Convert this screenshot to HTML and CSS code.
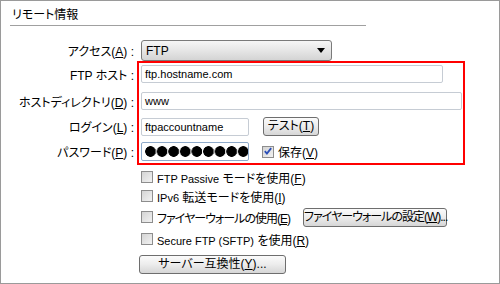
FILE: index.html
```html
<!DOCTYPE html>
<html lang="ja">
<head>
<meta charset="utf-8">
<title>リモート情報</title>
<link rel="stylesheet" href="styles.css">
</head>
<body>
<div class="panel">
  <div class="title">リモート情報</div>
  <div class="form">
    <div class="row r-access">
      <span class="lbl">アクセス(<u>A</u>) :</span>
      <div class="select"><span>FTP</span><i class="arrow"></i></div>
    </div>
    <div class="row r-host">
      <span class="lbl">FTP ホスト :</span>
      <div class="input w-host">ftp.hostname.com</div>
    </div>
    <div class="row r-dir">
      <span class="lbl">ホストディレクトリ(<u>D</u>) :</span>
      <div class="input w-dir">www</div>
    </div>
    <div class="row r-login">
      <span class="lbl">ログイン(<u>L</u>) :</span>
      <div class="input w-short">ftpaccountname</div>
      <div class="btn btn-test">テスト(<u>T</u>)</div>
    </div>
    <div class="row r-pass">
      <span class="lbl">パスワード(<u>P</u>) :</span>
      <div class="input w-short pass" aria-label="password"><span class="dots"></span></div>
      <span class="cb checked save-cb"><svg viewBox="0 0 11 11" width="11" height="11"><path d="M2 5.2 L4.3 7.8 L9 1.8" fill="none" stroke="#2b4fb8" stroke-width="2"/></svg></span>
      <span class="cb-text">保存(<u>V</u>)</span>
    </div>
    <div class="checks">
      <div class="crow c1"><span class="cb"></span><span class="cb-text"><span class="lat">FTP Passive</span> モードを使用(<u>F</u>)</span></div>
      <div class="crow c2"><span class="cb"></span><span class="cb-text"><span class="lat">IPv6</span> 転送モードを使用(<u>I</u>)</span></div>
      <div class="crow c3"><span class="cb"></span><span class="cb-text tight">ファイヤーウォールの使用(<u>E</u>)</span><div class="btn btn-fw tight">ファイヤーウォールの設定(<u>W</u>)...</div></div>
      <div class="crow c4"><span class="cb"></span><span class="cb-text"><span class="lat">Secure FTP (SFTP)</span> を使用(<u>R</u>)</span></div>
      <div class="crow c5"><div class="btn btn-srv">サーバー互換性(<u>Y</u>)...</div></div>
    </div>
  </div>
  <div class="redbox"></div>
</div>
</body>
</html>
```
FILE: styles.css
```css
html, body {
  margin: 0;
  padding: 0;
  background: #fff;
}
.panel {
  position: relative;
  width: 500px;
  height: 284px;
  box-sizing: border-box;
  border: 1px solid #9a9a9a;
  font-family: "Liberation Sans", "Noto Sans CJK JP", sans-serif;
  font-size: 12px;
  font-feature-settings: "palt";
  color: #000;
  overflow: hidden;
}
u { text-decoration: underline; text-underline-offset: 1px; }
.lat { font-size: 11px; }
.tight { letter-spacing: -1px; }
.title {
  margin-left: 9px;
  width: 354px;
  height: 20px;
  padding: 4px 0 0 2px;
  line-height: 20px;
  border-bottom: 1px solid #a0a0a0;
}
.form { padding-top: 14px; }
.row { display: flex; align-items: center; }
.lbl {
  flex: none;
  width: 133px;
  margin-right: 7px;
  text-align: right;
  white-space: nowrap;
}
.r-access { height: 21px; }
.r-host { height: 18px; margin-top: 4px; }
.r-dir { height: 18px; margin-top: 9px; }
.r-login { height: 19px; margin-top: 7px; }
.r-pass { height: 19px; margin-top: 6px; }

.select {
  box-sizing: border-box;
  width: 191px;
  height: 21px;
  border: 1px solid #7a7a7a;
  border-radius: 3px;
  background: linear-gradient(#f6f6f6, #e6e6e6 50%, #d4d4d4);
  display: flex;
  align-items: center;
  padding-left: 4px;
}
.select span { flex: 1; }
.arrow {
  width: 0;
  height: 0;
  margin-right: 6px;
  border-left: 4px solid transparent;
  border-right: 4px solid transparent;
  border-top: 5px solid #000;
}
.input {
  box-sizing: border-box;
  height: 18px;
  border: 1px solid #c6ccd4;
  border-radius: 2px;
  background: #fff;
  padding-left: 3px;
  font-size: 11px;
  line-height: 16px;
  white-space: nowrap;
  overflow: hidden;
}
.w-host { width: 302px; }
.w-dir { width: 321px; }
.w-short { width: 108px; }
.pass {
  height: 19px;
  border-color: #8ea9c9;
  display: flex;
  align-items: center;
}
.dots {
  display: block;
  flex: none;
  width: 110px;
  height: 11px;
  background-image: radial-gradient(circle at 5.5px 50%, #000 5px, transparent 5.6px);
  background-size: 11.6px 11px;
  background-repeat: repeat-x;
  background-position: 0 0;
}
.btn {
  box-sizing: border-box;
  height: 19px;
  border: 1px solid #6e6e6e;
  border-radius: 3px;
  background: linear-gradient(#fbfbfb, #ececec 50%, #d6d6d6);
  text-align: center;
  line-height: 17px;
  white-space: nowrap;
}
.btn-test { width: 56px; margin-left: 14px; }
.btn-fw { width: 144px; margin-left: auto; }
.btn-srv { width: 147px; margin-left: -2px; }

.cb {
  flex: none;
  box-sizing: border-box;
  width: 12px;
  height: 12px;
  border: 1px solid #8d8d8d;
  background: linear-gradient(135deg, #d4d4d4, #f2f2f2);
  display: inline-flex;
  align-items: center;
  justify-content: center;
}
.cb svg { display: block; }
.save-cb { margin-left: 13px; }
.cb-text { margin-left: 4px; white-space: nowrap; }
.checks { margin-left: 140px; }
.crow { display: flex; align-items: center; }
.c1 { height: 16px; margin-top: 8px; }
.c2 { height: 16px; margin-top: 3px; }
.c3 { height: 20px; margin-top: 3px; width: 306px; }
.c4 { height: 16px; margin-top: 4px; }
.c5 { height: 19px; margin-top: 8px; }

.redbox {
  position: absolute;
  left: 136px;
  top: 60px;
  width: 324px;
  height: 100px;
  border: 2px solid #ff0000;
}
```
